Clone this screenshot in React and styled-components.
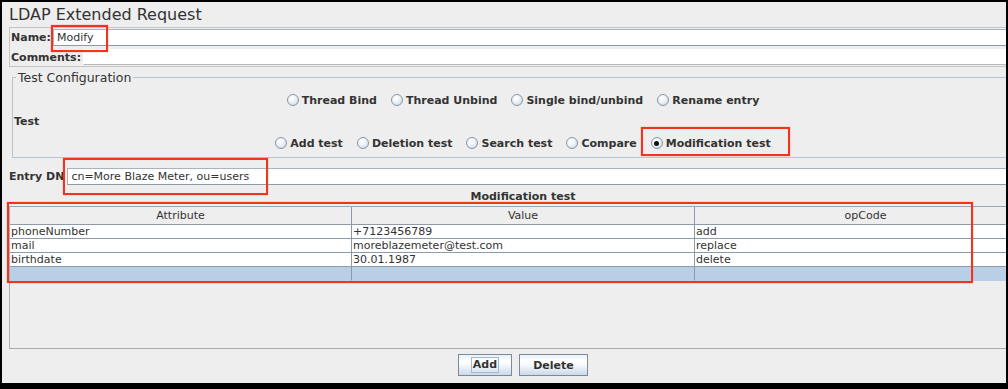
import React from "react";
import styled, { createGlobalStyle } from "styled-components";

const GlobalStyle = createGlobalStyle`
  html, body { margin: 0; padding: 0; background: #000; }
  body { font-family: "DejaVu Sans", "Liberation Sans", sans-serif; color: #333333; }
  * { box-sizing: border-box; }
`;

const Frame = styled.div`
  position: relative;
  width: 1008px;
  height: 389px;
  background: #000;
  padding: 2px 2px 6px 2px;
`;

const Window = styled.div`
  width: 1004px;
  height: 381px;
  background: #eeeeee;
  overflow: hidden;
`;

const Content = styled.div`
  width: 1042px;
  display: flex;
  flex-direction: column;
`;

const Title = styled.div`
  height: 25px;
  line-height: 25px;
  padding-left: 7px;
  font-size: 16px;
  color: #333;
`;

const NamePanel = styled.div`
  margin: 0 7px;
  border-top: 1px solid #c6c6c6;
  border-left: 1px solid #c6c6c6;
  display: flex;
  flex-direction: column;
  padding-bottom: 1px;
  border-bottom: 1px solid #c6c6c6;
`;

const FieldRow = styled.div`
  display: flex;
  align-items: center;
  height: ${(p) => p.$h}px;
  margin-top: ${(p) => p.$mt || 0}px;
  margin-left: ${(p) => p.$ml || 0}px;
  margin-right: ${(p) => p.$ml || 0}px;
`;

const Label = styled.span`
  font-size: 11px;
  font-weight: bold;
  padding-left: ${(p) => p.$pl || 0}px;
  margin-right: ${(p) => p.$gap || 2}px;
  white-space: nowrap;
`;

const TextField = styled.div`
  flex: 1;
  height: ${(p) => p.$h}px;
  background: #fff;
  border-top: 1px solid ${(p) => (p.$plain ? "#fff" : "#a9b3bd")};
  border-bottom: 1px solid ${(p) => (p.$plain ? "#b8b8b8" : "#8e9aa6")};
  border-left: 1px solid ${(p) => (p.$plain ? "#fff" : "#a9b3bd")};
  font-size: 11px;
  line-height: ${(p) => p.$h - 2}px;
  padding-left: 3px;
  color: #333;
  white-space: nowrap;
`;

const Fieldset = styled.fieldset`
  margin: 3px 10px 0 10px;
  padding: 0 0 6px 0;
  border: 1px solid #b8c4d0;
  min-width: 0;
  display: flex;
  flex-direction: column;
`;

const Legend = styled.legend`
  margin-left: 3px;
  padding: 0 2px;
  font-size: 12.5px;
  line-height: 15px;
  color: #333;
`;

const RadioRow = styled.div`
  display: flex;
  justify-content: center;
  align-items: center;
  gap: 14px;
  height: 16px;
  margin-top: ${(p) => p.$mt}px;
`;

const SubLabel = styled.div`
  font-size: 11px;
  font-weight: bold;
  height: 16px;
  line-height: 16px;
  padding-left: 1px;
  margin-top: 6px;
`;

const RadioOption = styled.label`
  display: flex;
  align-items: center;
  gap: 3px;
  font-size: 11px;
  font-weight: bold;
  white-space: nowrap;
  color: #333;
`;

const RadioCircle = styled.span`
  position: relative;
  width: 12px;
  height: 12px;
  border-radius: 50%;
  border: 1px solid #8797a6;
  background: radial-gradient(circle at 40% 35%, #ffffff 0%, #eef2f6 45%, #bccbd9 100%);
  &::after {
    content: "";
    display: ${(p) => (p.$checked ? "block" : "none")};
    position: absolute;
    left: 2.5px;
    top: 2.5px;
    width: 5px;
    height: 5px;
    border-radius: 50%;
    background: #111;
  }
`;

const Heading = styled.div`
  text-align: center;
  font-size: 11px;
  font-weight: bold;
  height: 19px;
  line-height: 19px;
  margin-top: 2px;
`;

const TablePane = styled.div`
  margin: 0 7px;
  height: 143px;
  border-top: 1px solid #9aa6b2;
  border-bottom: 1px solid #a8a8a8;
  border-left: 1px solid #a8b2bc;
  background: #eeeeee;
`;

const Grid = styled.div`
  display: grid;
  grid-template-columns: 342px 343px 1fr;
`;

const HeadCell = styled.div`
  height: 18px;
  line-height: 17px;
  font-size: 11px;
  text-align: center;
  background: #eeeeee;
  border-right: 1px solid #8d9aa7;
  border-bottom: 1px solid #8d9aa7;
  color: #333;
`;

const Cell = styled.div`
  height: 14px;
  line-height: 13px;
  font-size: 11px;
  padding-left: 1px;
  background: ${(p) => (p.$sel ? "#b8cfe5" : "#ffffff")};
  border-right: 1px solid #8d9aa7;
  border-bottom: 1px solid ${(p) => (p.$sel ? "#b8cfe5" : "#8d9aa7")};
  color: #333;
  white-space: nowrap;
  overflow: hidden;
`;

const ButtonBar = styled.div`
  display: flex;
  justify-content: center;
  gap: 7px;
  margin-top: 5px;
`;

const Button = styled.button`
  width: ${(p) => p.$w}px;
  height: 22px;
  padding: 0;
  border: 1px solid #7a8a99;
  background: linear-gradient(180deg, #eaf1f8 0%, #ffffff 30%, #f6f9fc 50%, #c9d9ea 100%);
  font-family: "DejaVu Sans", sans-serif;
  font-size: 11px;
  font-weight: bold;
  color: #333;
  display: flex;
  align-items: center;
  justify-content: center;
`;

const FocusText = styled.span`
  border: 1px solid #a3b8cc;
  padding: 0 1px;
  line-height: 14px;
`;

const Annot = styled.div`
  position: absolute;
  pointer-events: none;
  border: 2.5px solid #f5321c;
  box-shadow: 0 0 1px rgba(255, 40, 20, 0.6);
`;

const radios1 = ["Thread Bind", "Thread Unbind", "Single bind/unbind", "Rename entry"];
const radios2 = ["Add test", "Deletion test", "Search test", "Compare", "Modification test"];

const rows = [
  ["phoneNumber", "+7123456789", "add"],
  ["mail", "moreblazemeter@test.com", "replace"],
  ["birthdate", "30.01.1987", "delete"],
];

const annotations = [
  { left: 51, top: 25, width: 57, height: 27 },
  { left: 641, top: 127, width: 149, height: 29 },
  { left: 63, top: 158, width: 205, height: 37 },
  { left: 7, top: 202, width: 966, height: 81 },
];

export default function App() {
  return (
    <>
      <GlobalStyle />
      <Frame>
        <Window>
          <Content>
            <Title>LDAP Extended Request</Title>
            <NamePanel>
              <FieldRow $h={18}>
                <Label $pl={1} $gap={2}>Name:</Label>
                <TextField $h={17}>Modify</TextField>
              </FieldRow>
              <FieldRow $h={16} $mt={3}>
                <Label $pl={1} $gap={2}>Comments:</Label>
                <TextField $h={16} $plain />
              </FieldRow>
            </NamePanel>
            <Fieldset>
              <Legend>Test Configuration</Legend>
              <RadioRow $mt={7}>
                {radios1.map((r) => (
                  <RadioOption key={r}>
                    <RadioCircle />
                    {r}
                  </RadioOption>
                ))}
              </RadioRow>
              <SubLabel>Test</SubLabel>
              <RadioRow $mt={5}>
                {radios2.map((r) => (
                  <RadioOption key={r}>
                    <RadioCircle $checked={r === "Modification test"} />
                    {r}
                  </RadioOption>
                ))}
              </RadioRow>
            </Fieldset>
            <FieldRow $h={17} $mt={10} $ml={7}>
              <Label $gap={3}>Entry DN</Label>
              <TextField $h={17}>cn=More Blaze Meter, ou=users</TextField>
            </FieldRow>
            <Heading>Modification test</Heading>
            <TablePane>
              <Grid>
                <HeadCell>Attribute</HeadCell>
                <HeadCell>Value</HeadCell>
                <HeadCell>opCode</HeadCell>
                {rows.map((r) =>
                  r.map((c, i) => <Cell key={r[0] + i}>{c}</Cell>)
                )}
                <Cell $sel />
                <Cell $sel />
                <Cell $sel />
              </Grid>
            </TablePane>
            <ButtonBar>
              <Button $w={54}>
                <FocusText>Add</FocusText>
              </Button>
              <Button $w={69}>Delete</Button>
            </ButtonBar>
          </Content>
        </Window>
        {annotations.map((a, i) => (
          <Annot key={i} style={{ left: a.left, top: a.top, width: a.width, height: a.height }} />
        ))}
      </Frame>
    </>
  );
}
